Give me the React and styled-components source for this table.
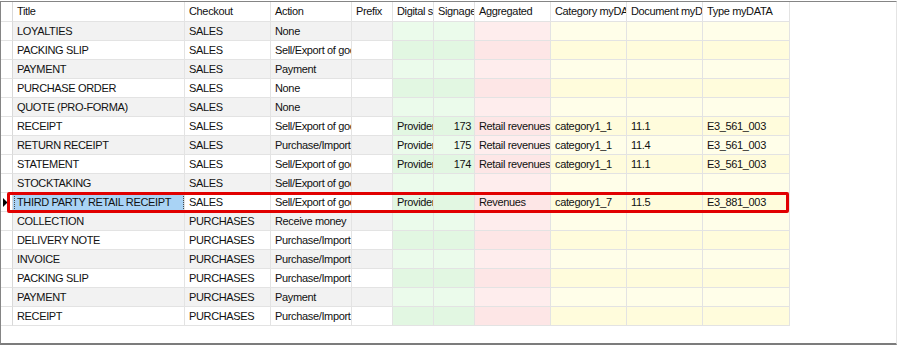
import React from "react";
import styled, { createGlobalStyle, css } from "styled-components";

const GlobalStyle = createGlobalStyle`
  html, body { margin: 0; padding: 0; background: #ffffff; }
  body { font-family: "Liberation Sans", Arial, sans-serif; }
`;

const COLS = "12px 172px 86px 81px 41px 41px 41px 76px 76px 76px 87px";

const Frame = styled.div`
  position: relative;
  box-sizing: border-box;
  width: 897px;
  height: 344px;
  margin-top: 1px;
  border-top: 1px solid #858585;
  border-left: 1px solid #858585;
  border-right: 1px solid #e4e4e4;
  border-bottom: 2px solid #7c7c7c;
  background: #ffffff;
  overflow: hidden;
`;

const Grid = styled.div`
  display: flex;
  flex-direction: column;
  width: 789px;
`;

const Row = styled.div`
  display: grid;
  grid-template-columns: ${COLS};
`;

const tones = {
  plain: ["#f2f2f2", "#ffffff"],
  green: ["#ebfbeb", "#e2f7e2"],
  pink: ["#feeded", "#fde6e6"],
  yellow: ["#fffee9", "#fffcdc"],
};

const Cell = styled.div`
  box-sizing: border-box;
  height: 19px;
  line-height: 18px;
  padding: 0 3px 0 4px;
  border-right: 1px solid #e3e3e3;
  border-bottom: 1px solid #e3e3e3;
  font-size: 11px;
  letter-spacing: -0.35px;
  color: #111111;
  white-space: nowrap;
  overflow: hidden;
  text-align: ${(p) => (p.$right ? "right" : "left")};
  background: ${(p) => tones[p.$tone || "plain"][p.$alt ? 1 : 0]};
  ${(p) =>
    p.$selected &&
    css`
      background: #a9d3f5;
      outline: 1px dotted #4a4a4a;
      outline-offset: -2px;
    `}
`;

const HeadCell = styled.div`
  box-sizing: border-box;
  height: 20px;
  line-height: 19px;
  padding: 0 3px 0 4px;
  border-right: 1px solid #e3e3e3;
  border-bottom: 1px solid #e3e3e3;
  font-size: 11px;
  letter-spacing: -0.35px;
  color: #111111;
  white-space: nowrap;
  overflow: hidden;
  background: #ffffff;
`;

const Indicator = styled.div`
  box-sizing: border-box;
  height: 19px;
  border-right: 1px solid #d9d9d9;
  border-bottom: 1px solid #e3e3e3;
  background: #ffffff;
  display: flex;
  align-items: center;
  padding-left: 2px;
`;

const IndicatorHead = styled(Indicator)`
  height: 20px;
`;

const Highlight = styled.div`
  position: absolute;
  left: 6px;
  top: 190px;
  width: 782px;
  height: 21px;
  box-sizing: border-box;
  border: 3px solid #e10000;
  border-radius: 2px;
  pointer-events: none;
`;

const headers = [
  "Title",
  "Checkout",
  "Action",
  "Prefix",
  "Digital signature",
  "Signage",
  "Aggregated",
  "Category myDATA",
  "Document myDATA",
  "Type myDATA",
];

const toneOf = ["plain", "plain", "plain", "plain", "green", "green", "pink", "yellow", "yellow", "yellow"];

const rows = [
  ["LOYALTIES", "SALES", "None", "", "", "", "", "", "", ""],
  ["PACKING SLIP", "SALES", "Sell/Export of goods", "", "", "", "", "", "", ""],
  ["PAYMENT", "SALES", "Payment", "", "", "", "", "", "", ""],
  ["PURCHASE ORDER", "SALES", "None", "", "", "", "", "", "", ""],
  ["QUOTE (PRO-FORMA)", "SALES", "None", "", "", "", "", "", "", ""],
  ["RECEIPT", "SALES", "Sell/Export of goods", "", "Provider", "173", "Retail revenues", "category1_1", "11.1", "E3_561_003"],
  ["RETURN RECEIPT", "SALES", "Purchase/Import", "", "Provider", "175", "Retail revenues", "category1_1", "11.4", "E3_561_003"],
  ["STATEMENT", "SALES", "Sell/Export of goods", "", "Provider", "174", "Retail revenues", "category1_1", "11.1", "E3_561_003"],
  ["STOCKTAKING", "SALES", "Sell/Export of goods", "", "", "", "", "", "", ""],
  ["THIRD PARTY RETAIL RECEIPT", "SALES", "Sell/Export of goods", "", "Provider", "", "Revenues", "category1_7", "11.5", "E3_881_003"],
  ["COLLECTION", "PURCHASES", "Receive money", "", "", "", "", "", "", ""],
  ["DELIVERY NOTE", "PURCHASES", "Purchase/Import", "", "", "", "", "", "", ""],
  ["INVOICE", "PURCHASES", "Purchase/Import", "", "", "", "", "", "", ""],
  ["PACKING SLIP", "PURCHASES", "Purchase/Import", "", "", "", "", "", "", ""],
  ["PAYMENT", "PURCHASES", "Payment", "", "", "", "", "", "", ""],
  ["RECEIPT", "PURCHASES", "Purchase/Import", "", "", "", "", "", "", ""],
];

const SELECTED = 9;

function Arrow() {
  return (
    <svg width="5" height="9" viewBox="0 0 5 9">
      <polygon points="0,0 4.5,4.5 0,9" fill="#000" />
    </svg>
  );
}

export default function App() {
  return (
    <>
      <GlobalStyle />
      <Frame>
        <Grid>
          <Row>
            <IndicatorHead />
            {headers.map((h) => (
              <HeadCell key={h}>{h}</HeadCell>
            ))}
          </Row>
          {rows.map((r, i) => (
            <Row key={i}>
              <Indicator>{i === SELECTED && <Arrow />}</Indicator>
              {r.map((v, c) => (
                <Cell
                  key={c}
                  $tone={toneOf[c]}
                  $alt={i % 2 === 1}
                  $right={c === 5}
                  $selected={i === SELECTED && c === 0}
                >
                  {v}
                </Cell>
              ))}
            </Row>
          ))}
        </Grid>
        <Highlight />
      </Frame>
    </>
  );
}
